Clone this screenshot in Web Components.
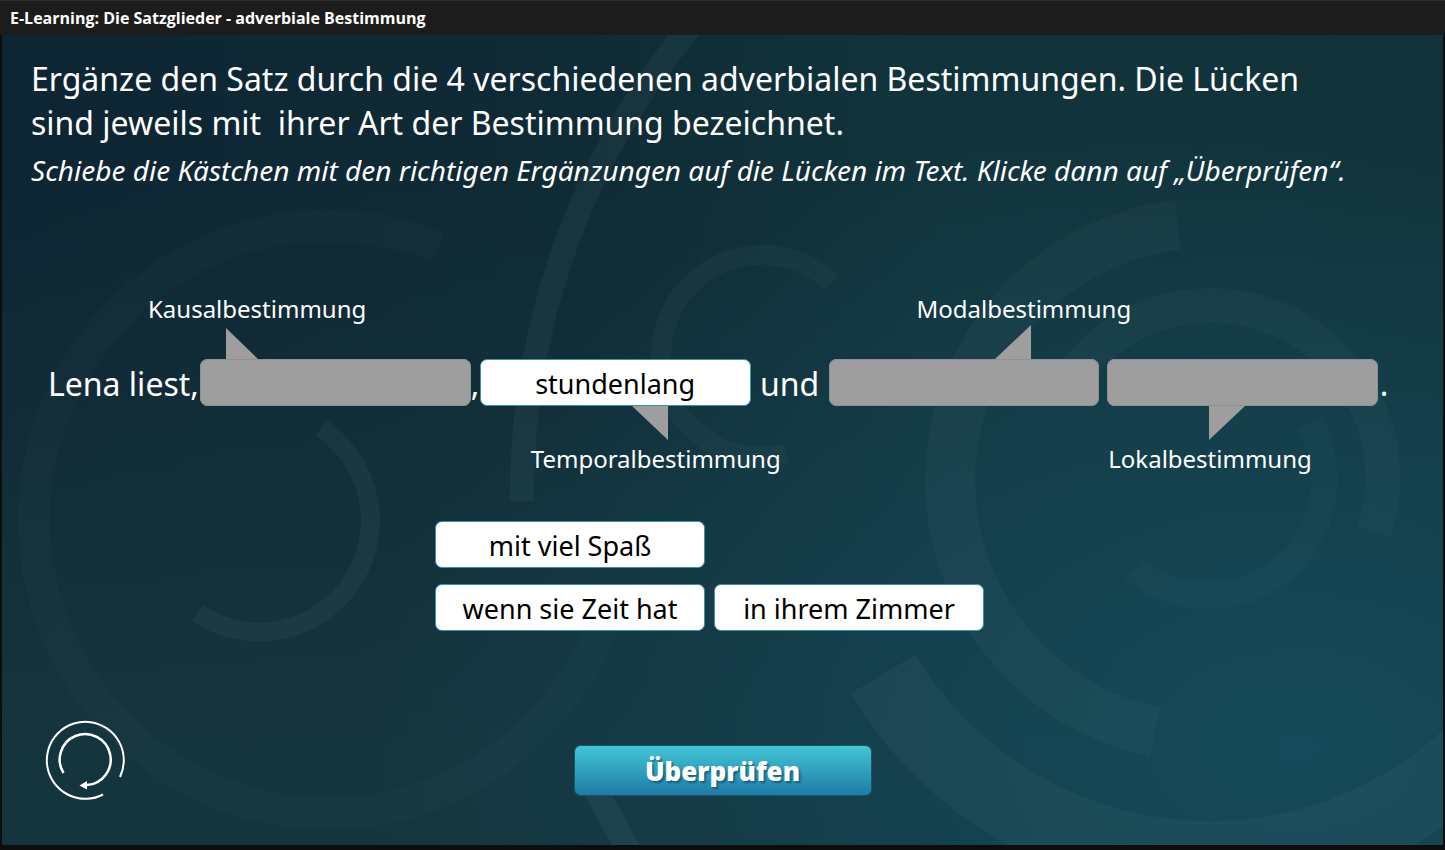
<!DOCTYPE html>
<html lang="de">
<head>
<meta charset="utf-8">
<title>E-Learning: Die Satzglieder - adverbiale Bestimmung</title>
<style>
  body { margin: 0; background: #0d0d0e; font-family: "Noto Sans", "Open Sans", sans-serif; color: #fff; }
</style>
</head>
<body>
<learning-app></learning-app>

<script>
function define(name, html, setup) {
  const template = document.createElement('template');
  template.innerHTML = html;
  customElements.define(name, class extends HTMLElement {
    constructor() {
      super();
      this.attachShadow({ mode: 'open' }).append(template.content.cloneNode(true));
    }
    connectedCallback() { if (setup) setup(this, this.shadowRoot); }
  });
}

/* Faint ring segments behind the exercise */
define('ring-backdrop', `
  <style>
    :host { display: block; position: absolute; inset: 0; overflow: hidden;
      background:
        radial-gradient(ellipse 65% 80% at 90% 88%, #154a5a 0%, #154a5a00 100%),
        linear-gradient(180deg, #15353e00 15%, #15353e 90%),
        linear-gradient(90deg, #0e2533 0%, #0f2b36 40%, #11343c 65%, #113239 100%); }
    svg { display: block; width: 100%; height: 100%; fill: none; stroke: #b9d2d2; }
  </style>
  <svg viewBox="2 35 1441 810" preserveAspectRatio="xMidYMid slice" aria-hidden="true">
    <path d="M438 247A294 294 0 1 0 605 618" stroke-width="32" stroke-opacity=".025"/>
    <path d="M321 428A111 111 0 1 1 197 613" stroke-width="19" stroke-opacity=".05"/>
    <path d="M696 20A734 734 0 0 0 522 501" stroke-width="24" stroke-opacity=".05"/>
    <path d="M590 780L632 856" stroke-width="24" stroke-opacity=".055"/>
    <path d="M832 283A101 101 0 1 0 786 454" stroke-width="20" stroke-opacity=".04"/>
    <path d="M1178 225A257 257 0 0 0 1155 732" stroke-width="50" stroke-opacity=".04"/>
    <path d="M1075 372A172 172 0 0 1 1374 532" stroke-width="35" stroke-opacity=".03"/>
    <path d="M1309 422A116 116 0 0 1 1133 568" stroke-width="27" stroke-opacity=".025"/>
    <path d="M883 674A381 381 0 0 0 1500 725" stroke-width="76" stroke-opacity=".045"/>
  </svg>`);

define('app-title', `
  <style>
    :host { display: block; background: #1c1c1c; border-top: 1px solid #2c2c2c; }
    h1 { margin: 0; padding: 0 10px; font: 700 16px/34px "Open Sans", "Noto Sans", sans-serif; }
  </style>
  <h1><slot></slot></h1>`);

define('task-intro', `
  <style>
    :host { display: block; padding: 22px 29px 0; }
    h2 { margin: 0; font-size: 32px; font-weight: 400; line-height: 44px; white-space: pre; }
    p { margin: 0; font-size: 28px; font-style: italic; line-height: 50px; white-space: nowrap; }
  </style>
  <h2><slot name="task"></slot></h2>
  <p><slot name="hint"></slot></p>`);

/* Draggable answer */
define('answer-chip', `
  <style>
    :host { display: block; }
    button { display: block; width: 100%; height: 47px; margin: 0; padding: 3px 0 0; border: 1px solid #3d93a8;
      border-radius: 7px; background: #fff; color: #000; font: 400 27px/40px "Noto Sans", "Open Sans", sans-serif;
      white-space: nowrap; cursor: grab; }
  </style>
  <button type="button" draggable="true"><slot></slot></button>`);

/* Drop target with its pointer and the name of the adverbial */
define('gap-field', `
  <style>
    :host { display: grid; grid-template-columns: minmax(0, 1fr); grid-template-rows: 33px 34px 47px 34px 40px; min-width: 0; }
    .name { grid-row: 1; justify-self: start; margin-left: var(--name-x); font-size: 24px; line-height: 33px; white-space: nowrap; }
    svg { grid-row: 2; display: block; width: 36px; height: 34px; margin-left: var(--tail-x); fill: #9e9e9e; }
    .box { grid-row: 3; border-radius: 8px; background: #9e9e9e; box-shadow: inset 0 0 0 1px #8c9294; }
    :host([filled]) .box { background: none; box-shadow: none; }
    :host([below]) .name { grid-row: 5; line-height: 38px; }
    :host([below]) svg { grid-row: 4; }
  </style>
  <span class="name" id="name"></span>
  <svg viewBox="0 0 36 34" aria-hidden="true"><path/></svg>
  <div class="box" role="group" aria-labelledby="name"><slot></slot></div>`,
  (host, root) => {
    const shapes = {
      'up-left': 'M0 3V34H32Z', 'up-right': 'M36 0V34H0Z',
      'down-right': 'M0 0H36V34Z', 'down-left': 'M0 0H36L0 34Z'
    };
    root.getElementById('name').textContent = host.getAttribute('name');
    root.querySelector('path').setAttribute('d', shapes[host.getAttribute('tail')]);
  });

define('gap-sentence', `
  <style>
    :host { display: grid;
      grid-template-columns: 152px minmax(0, 1fr) 9px minmax(0, 1fr) 78px minmax(0, 1fr) 8px minmax(0, 1fr) 12px;
      margin: 97px 53px 0 46px; }
    .word { padding-top: 66px; font-size: 32px; line-height: 51px; white-space: nowrap; }
    .mid, .end { text-align: center; }
    .causal { --name-x: -52px; --tail-x: 26px; }
    .temporal { --name-x: 51px; --tail-x: 152px; }
    .modal { --name-x: 88px; --tail-x: 166px; }
    .local { --name-x: 1px; --tail-x: 102px; }
  </style>
  <span class="word">Lena liest,</span>
  <gap-field class="causal" name="Kausalbestimmung" tail="up-left"></gap-field>
  <span class="word">,</span>
  <gap-field class="temporal" name="Temporalbestimmung" tail="down-right" below filled><answer-chip>stundenlang</answer-chip></gap-field>
  <span class="word mid">und</span>
  <gap-field class="modal" name="Modalbestimmung" tail="up-right"></gap-field>
  <span></span>
  <gap-field class="local" name="Lokalbestimmung" tail="down-left" below></gap-field>
  <span class="word end">.</span>`);

define('answer-pool', `
  <style>
    :host { display: grid; grid-template-columns: 270px 270px; gap: 16px 9px; justify-content: center; padding: 41px 26px 0 0; }
    ::slotted(:nth-child(n + 2)) { grid-row: 2; }
  </style>
  <slot></slot>`);

define('reset-button', `
  <style>
    :host { display: block; }
    button { display: block; padding: 0; border: 0; background: none; cursor: pointer; }
    svg { display: block; width: 80px; height: 80px; fill: none; stroke: #fff; }
  </style>
  <button type="button" aria-label="Zurücksetzen">
    <svg viewBox="0 0 80 80">
      <path d="M75 57A38.5 38.5 0 1 0 58 74.500" stroke-width="2"/>
      <path d="M18.500 53A25.500 25.500 0 1 1 42 65" stroke-width="2.500"/>
      <path d="M34.500 65.500L42 61V69.500Z" fill="#fff" stroke="none"/>
    </svg>
  </button>`);

define('check-button', `
  <style>
    :host { display: block; }
    button { display: block; width: 298px; height: 51px; padding: 2px 0 0; border: 1px solid #1b5668; border-radius: 6px;
      background: linear-gradient(#43c5d6, #1e7ca6) padding-box; color: #fff; text-shadow: 2px 2px 2px #0b3a5090;
      font: 800 26px/47px "Open Sans", "Noto Sans", sans-serif; cursor: pointer; }
  </style>
  <button type="button"><slot></slot></button>`);

define('learning-app', `
  <style>
    :host { display: flex; flex-direction: column; min-height: 100vh; }
    main { position: relative; flex: 1; display: flex; flex-direction: column; margin: 0 2px 5px; }
    .content { position: relative; flex: 1; display: flex; flex-direction: column; }
    footer { display: grid; grid-template-columns: 1fr auto 1fr; align-items: center; margin-top: auto; padding: 0 43px 45px; }
    check-button { margin-top: 21px; }
  </style>
  <app-title>E-Learning: Die Satzglieder - adverbiale Bestimmung</app-title>
  <main>
    <ring-backdrop></ring-backdrop>
    <div class="content">
      <task-intro>
        <span slot="task">Ergänze den Satz durch die 4 verschiedenen adverbialen Bestimmungen. Die Lücken<br>sind jeweils mit  ihrer Art der Bestimmung bezeichnet.</span>
        <span slot="hint">Schiebe die Kästchen mit den richtigen Ergänzungen auf die Lücken im Text. Klicke dann auf „Überprüfen“.</span>
      </task-intro>
      <gap-sentence></gap-sentence>
      <answer-pool>
        <answer-chip>mit viel Spaß</answer-chip>
        <answer-chip>wenn sie Zeit hat</answer-chip>
        <answer-chip>in ihrem Zimmer</answer-chip>
      </answer-pool>
      <footer>
        <reset-button></reset-button>
        <check-button>Überprüfen</check-button>
      </footer>
    </div>
  </main>`);
</script>
</body>
</html>
